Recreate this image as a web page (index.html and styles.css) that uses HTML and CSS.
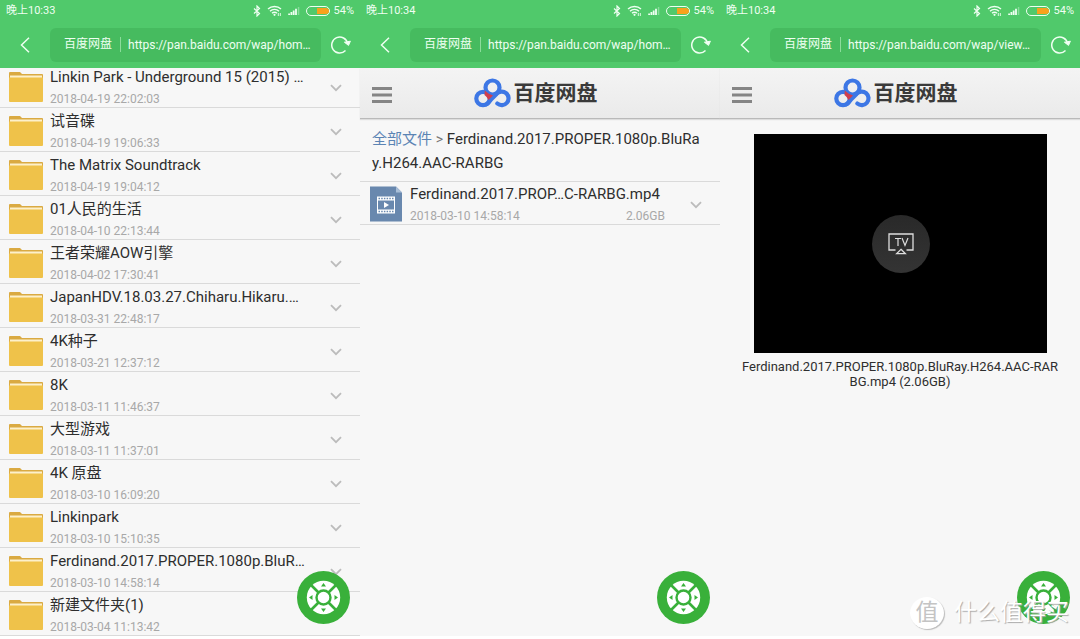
FILE: index.html
```
<!DOCTYPE html>
<html lang="zh-CN">
<head>
<meta charset="utf-8">
<meta name="viewport" content="width=device-width, initial-scale=1">
<title>百度网盘</title>
<link rel="stylesheet" href="styles.css">
</head>
<body>
<svg class="defs" aria-hidden="true">
  <symbol id="bluetooth" viewBox="0 0 8 12"><path d="M1 3.500 6.500 8.500 4 11V1l2.500 2.500L1 8.500" fill="none" stroke="currentColor" stroke-width="1.200"/></symbol>
  <symbol id="wifi" viewBox="0 0 15 11"><path d="M1 4a9.500 9.500 0 0 1 13 0M3 6.200a6.500 6.500 0 0 1 9 0M5 8.300a3.500 3.500 0 0 1 5 0" fill="none" stroke="currentColor" stroke-width="1.400"/><circle cx="7.500" cy="9.800" r="1.100" fill="currentColor"/><path d="M11.300 8v3M13.300 8v3" stroke="currentColor" stroke-width=".9"/></symbol>
  <symbol id="signal" viewBox="0 0 12 8"><path d="M.2 6.500h1.800V8H.2zM2.500 5h1.800v3H2.500zM4.800 3.500h1.800V8H4.800zM7.100 1.800h1.800V8H7.100z" fill="currentColor"/><path d="M9.800 0h1.500v8H9.800z" fill="currentColor" opacity=".35"/></symbol>
  <symbol id="battery" viewBox="0 0 25 10"><rect x=".5" y=".5" width="23" height="9" rx="4.500" fill="none" stroke="currentColor"/><path d="M11 2h9a3 3 0 0 1 0 6h-9z" fill="#f6a21d"/></symbol>
  <symbol id="back" viewBox="0 0 10 16"><path d="M9 .8 1.500 8 9 15.200" fill="none" stroke="currentColor" stroke-width="1.500"/></symbol>
  <symbol id="reload" viewBox="0 0 20 18"><path d="M14.500 14.600A8 8 0 1 1 16.600 7.500" fill="none" stroke="currentColor" stroke-width="1.500"/><path d="m13.400 6.200 6-1-1.900 4.200z" fill="currentColor" stroke="currentColor" stroke-linejoin="round"/></symbol>
  <symbol id="folder" viewBox="0 0 34 30"><path d="M0 1q0-1 1-1h10l2 2h20q1 0 1 1v6H0z" fill="#daaa42"/><path d="M1 3.500h32v3H1z" fill="#fdf0cb"/><path d="M0 5.500h34v23.500q0 1-1 1H1q-1 0-1-1z" fill="#efc24a"/></symbol>
  <symbol id="down" viewBox="0 0 12 8"><path d="m1 1.200 5 5 5-5" fill="none" stroke="#bcbcbc" stroke-width="1.800"/></symbol>
  <symbol id="menu" viewBox="0 0 20 16"><path d="M0 1.500h20M0 8h20M0 14.500h20" stroke="#858585" stroke-width="2.800"/></symbol>
  <symbol id="logo" viewBox="0 0 37 30"><g fill="none" stroke="#3d77e5" stroke-width="4.200"><circle cx="18.500" cy="9.500" r="7"/><circle cx="9" cy="20.500" r="6.700"/><path d="M13 26q1.500-1 4-4.500l5.500-5.500a6.800 6.800 0 1 1 .8 9.500" stroke-linecap="round"/></g><path d="m10.800 12.500 4 3.300 4.200 1.700-4.500 4.500q-1.300-3-4-5z" fill="#cf3f4e"/></symbol>
  <symbol id="video" viewBox="0 0 32 35"><path d="M0 0h26l6 6v29H0z" fill="#6988ae"/><path d="m26 0 6 6h-6z" fill="#a9bfd8"/><path d="M7 10h18v17H7z" fill="#fff"/><path d="M8 14h16v9H8z" fill="#6988ae"/><path d="M8.500 12h15M8.500 25h15" stroke="#6988ae" stroke-width="1.600" stroke-dasharray="1.500 1.200"/><path d="m14 15.500 5 3-5 3z" fill="#fff"/></symbol>
  <symbol id="pad" viewBox="0 0 53 53"><circle cx="26.500" cy="26.500" r="26.500" fill="#39b03a"/><circle cx="26.500" cy="26.500" r="16.700" fill="#fff"/><path d="m14 14 25 25M39 14 14 39" stroke="#39b03a" stroke-width="2.600"/><circle cx="26.500" cy="26.500" r="7" fill="#fff" stroke="#39b03a" stroke-width="2.400"/><path d="m24 15.500 2.500-3.500 2.500 3.500zM24 37.500l2.500 3.500 2.500-3.500zM15.500 24 12 26.500l3.500 2.500zM37.500 24l3.500 2.500-3.500 2.500z" fill="#39b03a"/></symbol>
  <symbol id="cast" viewBox="0 0 26 22"><path d="M7.500 17H1V1h24v16h-6.500M13 16.300l4.300 4.300H8.700z" fill="none" stroke="#ddd" stroke-width="1.300"/><path d="M7 5.500h6M10 5.500V13M14 5l3 7.500L20 5" fill="none" stroke="#ddd" stroke-width="1.200"/></symbol>
</svg>

<div class="screens">
  <section class="screen">
    <div class="chrome">
      <div class="status"><span class="clock">晚上10:33</span><svg class="i-bt"><use href="#bluetooth"/></svg><svg class="i-wifi"><use href="#wifi"/></svg><svg class="i-signal"><use href="#signal"/></svg><svg class="i-battery"><use href="#battery"/></svg><span>54%</span></div>
      <div class="nav">
        <button class="nav-btn" aria-label="返回"><svg class="i-back"><use href="#back"/></svg></button>
        <div class="address"><label for="url1">百度网盘</label><input id="url1" type="text" value="https://pan.baidu.com/wap/hom…" readonly></div>
        <button class="nav-btn reload" aria-label="刷新"><svg class="i-reload"><use href="#reload"/></svg></button>
      </div>
    </div>
    <main class="content">
      <ul class="files scrolled">
        <li class="file"><svg class="i-folder"><use href="#folder"/></svg><div class="info"><a href="#">Linkin Park - Underground 15 (2015) …</a><p class="meta"><time>2018-04-19 22:02:03</time></p></div><button class="more" aria-label="更多"><svg class="i-down"><use href="#down"/></svg></button></li>
        <li class="file"><svg class="i-folder"><use href="#folder"/></svg><div class="info"><a href="#">试音碟</a><p class="meta"><time>2018-04-19 19:06:33</time></p></div><button class="more" aria-label="更多"><svg class="i-down"><use href="#down"/></svg></button></li>
        <li class="file"><svg class="i-folder"><use href="#folder"/></svg><div class="info"><a href="#">The Matrix Soundtrack</a><p class="meta"><time>2018-04-19 19:04:12</time></p></div><button class="more" aria-label="更多"><svg class="i-down"><use href="#down"/></svg></button></li>
        <li class="file"><svg class="i-folder"><use href="#folder"/></svg><div class="info"><a href="#">01人民的生活</a><p class="meta"><time>2018-04-10 22:13:44</time></p></div><button class="more" aria-label="更多"><svg class="i-down"><use href="#down"/></svg></button></li>
        <li class="file"><svg class="i-folder"><use href="#folder"/></svg><div class="info"><a href="#">王者荣耀AOW引擎</a><p class="meta"><time>2018-04-02 17:30:41</time></p></div><button class="more" aria-label="更多"><svg class="i-down"><use href="#down"/></svg></button></li>
        <li class="file"><svg class="i-folder"><use href="#folder"/></svg><div class="info"><a href="#">JapanHDV.18.03.27.Chiharu.Hikaru.…</a><p class="meta"><time>2018-03-31 22:48:17</time></p></div><button class="more" aria-label="更多"><svg class="i-down"><use href="#down"/></svg></button></li>
        <li class="file"><svg class="i-folder"><use href="#folder"/></svg><div class="info"><a href="#">4K种子</a><p class="meta"><time>2018-03-21 12:37:12</time></p></div><button class="more" aria-label="更多"><svg class="i-down"><use href="#down"/></svg></button></li>
        <li class="file"><svg class="i-folder"><use href="#folder"/></svg><div class="info"><a href="#">8K</a><p class="meta"><time>2018-03-11 11:46:37</time></p></div><button class="more" aria-label="更多"><svg class="i-down"><use href="#down"/></svg></button></li>
        <li class="file"><svg class="i-folder"><use href="#folder"/></svg><div class="info"><a href="#">大型游戏</a><p class="meta"><time>2018-03-11 11:37:01</time></p></div><button class="more" aria-label="更多"><svg class="i-down"><use href="#down"/></svg></button></li>
        <li class="file"><svg class="i-folder"><use href="#folder"/></svg><div class="info"><a href="#">4K 原盘</a><p class="meta"><time>2018-03-10 16:09:20</time></p></div><button class="more" aria-label="更多"><svg class="i-down"><use href="#down"/></svg></button></li>
        <li class="file"><svg class="i-folder"><use href="#folder"/></svg><div class="info"><a href="#">Linkinpark</a><p class="meta"><time>2018-03-10 15:10:35</time></p></div><button class="more" aria-label="更多"><svg class="i-down"><use href="#down"/></svg></button></li>
        <li class="file"><svg class="i-folder"><use href="#folder"/></svg><div class="info"><a href="#">Ferdinand.2017.PROPER.1080p.BluR…</a><p class="meta"><time>2018-03-10 14:58:14</time></p></div><button class="more" aria-label="更多"><svg class="i-down"><use href="#down"/></svg></button></li>
        <li class="file"><svg class="i-folder"><use href="#folder"/></svg><div class="info"><a href="#">新建文件夹(1)</a><p class="meta"><time>2018-03-04 11:13:42</time></p></div></li>
      </ul>
    </main>
    <button class="fab" aria-label="工具"><svg><use href="#pad"/></svg></button>
  </section>

  <section class="screen">
    <div class="chrome">
      <div class="status"><span class="clock">晚上10:34</span><svg class="i-bt"><use href="#bluetooth"/></svg><svg class="i-wifi"><use href="#wifi"/></svg><svg class="i-signal"><use href="#signal"/></svg><svg class="i-battery"><use href="#battery"/></svg><span>54%</span></div>
      <div class="nav">
        <button class="nav-btn" aria-label="返回"><svg class="i-back"><use href="#back"/></svg></button>
        <div class="address"><label for="url2">百度网盘</label><input id="url2" type="text" value="https://pan.baidu.com/wap/hom…" readonly></div>
        <button class="nav-btn reload" aria-label="刷新"><svg class="i-reload"><use href="#reload"/></svg></button>
      </div>
    </div>
    <header class="site">
      <button class="menu" aria-label="菜单"><svg class="i-menu"><use href="#menu"/></svg></button>
      <h1 class="brand"><svg class="i-logo"><use href="#logo"/></svg>百度网盘</h1>
    </header>
    <main class="content">
      <nav class="crumbs"><a href="#">全部文件</a> <span class="sep">&gt;</span> Ferdinand.2017.PROPER.1080p.BluRay.H264.AAC-RARBG</nav>
      <ul class="files">
        <li class="file"><svg class="i-video"><use href="#video"/></svg><div class="info"><a href="#">Ferdinand.2017.PROP…C-RARBG.mp4</a><p class="meta"><time>2018-03-10 14:58:14</time><span>2.06GB</span></p></div><button class="more" aria-label="更多"><svg class="i-down"><use href="#down"/></svg></button></li>
      </ul>
    </main>
    <button class="fab" aria-label="工具"><svg><use href="#pad"/></svg></button>
  </section>

  <section class="screen">
    <div class="chrome">
      <div class="status"><span class="clock">晚上10:34</span><svg class="i-bt"><use href="#bluetooth"/></svg><svg class="i-wifi"><use href="#wifi"/></svg><svg class="i-signal"><use href="#signal"/></svg><svg class="i-battery"><use href="#battery"/></svg><span>54%</span></div>
      <div class="nav">
        <button class="nav-btn" aria-label="返回"><svg class="i-back"><use href="#back"/></svg></button>
        <div class="address"><label for="url3">百度网盘</label><input id="url3" type="text" value="https://pan.baidu.com/wap/view…" readonly></div>
        <button class="nav-btn reload" aria-label="刷新"><svg class="i-reload"><use href="#reload"/></svg></button>
      </div>
    </div>
    <header class="site">
      <button class="menu" aria-label="菜单"><svg class="i-menu"><use href="#menu"/></svg></button>
      <h1 class="brand"><svg class="i-logo"><use href="#logo"/></svg>百度网盘</h1>
    </header>
    <main class="content">
      <figure class="player">
        <div class="stage"><button class="cast" aria-label="投屏到电视"><svg><use href="#cast"/></svg></button></div>
        <figcaption>Ferdinand.2017.PROPER.1080p.BluRay.H264.AAC-RARBG.mp4 (2.06GB)</figcaption>
      </figure>
    </main>
    <button class="fab" aria-label="工具"><svg><use href="#pad"/></svg></button>
    <div class="watermark"><span class="seal">值</span><span>什么值得买</span></div>
  </section>
</div>
</body>
</html>
```

FILE: styles.css
```
* { box-sizing: border-box; }

body {
  margin: 0;
  background: #fff;
  color: #2e2e2e;
  font-family: Roboto, "Noto Sans CJK SC", sans-serif;
  font-size: 15px;
}

svg { display: block; flex: none; }
button { padding: 0; border: 0; background: none; color: inherit; font: inherit; cursor: pointer; }
a { color: inherit; text-decoration: none; }
ul, p, h1, figure { margin: 0; padding: 0; list-style: none; }
.defs { position: absolute; width: 0; height: 0; }

.screens {
  display: grid;
  grid-template-columns: repeat(3, 1fr);
  min-height: 100vh;
  padding-bottom: 3px;
}
.screen {
  position: relative;
  display: flex;
  flex-direction: column;
  min-width: 0;
  background: #f7f7f7;
}

.chrome { position: relative; background: #50c96b; color: #effff2; }
.status {
  display: flex;
  align-items: center;
  gap: 6px;
  height: 21px;
  padding: 0 6px;
  font-size: 11px;
  line-height: 16px;
}
.clock { flex: 1; }
.i-bt { width: 8px; height: 12px; }
.i-wifi { width: 15px; height: 11px; }
.i-signal { width: 12px; height: 8px; }
.i-battery { width: 25px; height: 10px; margin-right: -3px; }

.nav { display: flex; align-items: center; height: 47px; }
.nav-btn { display: grid; place-items: center; width: 50px; height: 40px; }
.reload { width: 39px; }
.i-back { width: 10px; height: 16px; }
.i-reload { width: 20px; height: 18px; }
.address {
  flex: 1;
  display: flex;
  align-items: center;
  min-width: 0;
  height: 34px;
  padding-left: 14px;
  border-radius: 6px;
  background: #46bb5f;
  font-size: 12px;
}
.address label { padding-right: 8px; border-right: 1px solid #8bdc9b; line-height: 15px; }
.address input {
  flex: 1;
  min-width: 0;
  padding: 0 0 0 7px;
  border: 0;
  outline: 0;
  background: none;
  color: inherit;
  font: inherit;
}

.site {
  display: grid;
  grid-template-columns: 44px 1fr 44px;
  align-items: center;
  height: 51px;
  border-bottom: 1px solid #b9b9b9;
  background: linear-gradient(#f4f4f4, #eaeaea);
  box-shadow: 0 1px 1px #ddd;
}
.menu { justify-self: center; padding-top: 4px; }
.i-menu { width: 20px; height: 16px; }
.brand {
  display: flex;
  align-items: center;
  justify-content: center;
  gap: 3px;
  padding-right: 9px;
  color: #3a3a3a;
  font-size: 21px;
  font-weight: 700;
  line-height: 30px;
}
.i-logo { width: 37px; height: 30px; }

.content { flex: 1; overflow: hidden; }
.scrolled { margin-top: -4px; }
.file {
  display: flex;
  align-items: center;
  height: 44px;
  padding-left: 9px;
  border-bottom: 1px solid #dadada;
}
.i-folder { width: 34px; height: 30px; margin: 3px 7px 0 0; }
.i-video { width: 32px; height: 36px; margin: 2px 8px 0 1px; }
.info { flex: 1; min-width: 0; padding-top: 2px; white-space: nowrap; }
.info a { display: block; line-height: 22px; }
.meta {
  display: flex;
  justify-content: space-between;
  padding-top: 2px;
  color: #a8a8a8;
  font-size: 12px;
  line-height: 18px;
}
.more { display: grid; place-items: center; width: 30px; height: 40px; margin: 4px 9px 0 16px; }
.i-down { width: 12px; height: 8px; }

.crumbs {
  padding: 8px 12px 6px;
  border-bottom: 1px solid #dadada;
  line-height: 24px;
  word-break: break-all;
}
.crumbs a { color: #5b84b4; line-height: 20px; }
.sep { color: #777; font-size: 14px; line-height: 20px; }
.crumbs + .files { margin-top: -1px; }

.player { padding: 15px 20px 0; text-align: center; }
.stage {
  display: grid;
  place-items: center;
  height: 219px;
  margin: 0 13px 6px 14px;
  background: #000;
}
.cast {
  display: grid;
  place-items: center;
  width: 58px;
  height: 58px;
  border-radius: 50%;
  background: linear-gradient(#292929, #343434);
}
.cast svg { width: 26px; height: 22px; }
.player figcaption { font-size: 13px; line-height: 15px; word-break: break-all; }

.fab { position: absolute; right: 10px; bottom: 12px; }
.fab svg { width: 53px; height: 53px; }

.watermark {
  position: absolute;
  right: 11px;
  bottom: 7px;
  display: flex;
  align-items: center;
  gap: 10px;
  color: #fff;
  font-size: 23px;
  line-height: 32px;
  text-shadow: 1px 1px 1px #aaa;
}
.seal {
  width: 34px;
  height: 32px;
  border-radius: 50%;
  background: #fff;
  box-shadow: 1px 1px 1px #bbb;
  color: #c4c4c4;
  text-align: center;
  text-shadow: none;
}
```
